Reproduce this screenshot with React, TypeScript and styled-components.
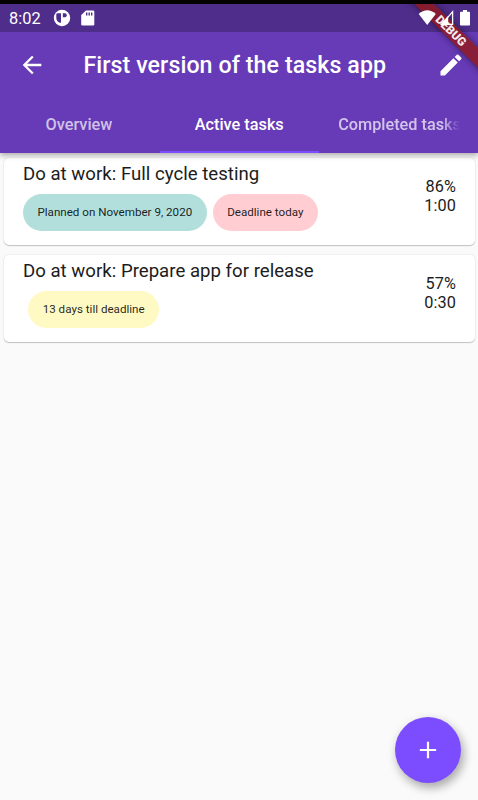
import React from 'react';
import styled, { createGlobalStyle } from 'styled-components';

const GlobalStyle = createGlobalStyle`
  html, body, #root { height: 100%; }
  body { margin: 0; background: #fafafa; font-family: Roboto, "Noto Sans", sans-serif; overflow: hidden; }
  *, *::before, *::after { box-sizing: border-box; }
`;

const Screen = styled.div`
  position: relative;
  width: 478px;
  height: 800px;
  overflow: hidden;
  display: flex;
  flex-direction: column;
  background: #fafafa;
`;

const Header = styled.header`
  flex: none;
  display: flex;
  flex-direction: column;
  height: 153px;
  background: #673ab7;
  box-shadow: 0 2px 5px rgba(0, 0, 0, 0.25), 0 4px 6px rgba(0, 0, 0, 0.08);
  z-index: 1;
`;

const StatusBar = styled.div`
  display: flex;
  align-items: center;
  height: 32px;
  padding: 0 7px 0 9px;
  background: #4f2d8b;
  border-top: 4px solid #030303;
  color: #fff;
`;

const Clock = styled.span`
  width: 43px;
  padding-top: 1px;
  font-size: 16.4px;
  line-height: 28px;
`;

const StatusIcons = styled.div<{ $end?: boolean }>`
  position: relative;
  z-index: 3;
  display: flex;
  align-items: center;
  margin-left: ${(p) => (p.$end ? 'auto' : '0')};
`;

const Toolbar = styled.div`
  display: flex;
  align-items: center;
  height: 65px;
  padding: 0 13px 0 18px;
`;

const IconButton = styled.button`
  display: flex;
  padding: 0;
  border: 0;
  background: none;
  color: #fff;
`;

const Title = styled.h1`
  flex: 1;
  margin: 0 0 0 37.4px;
  color: #fff;
  font-size: 23.2px;
  line-height: 28px;
  font-weight: 500;
  letter-spacing: 0.08px;
  white-space: nowrap;
`;

const Tabs = styled.nav`
  display: grid;
  grid-template-columns: 159.5px 159.5px 159px;
  height: 56px;
`;

const Tab = styled.div<{ $active?: boolean; $align?: 'start' | 'end' }>`
  display: flex;
  align-items: center;
  justify-content: center;
  padding-left: ${(p) => (p.$align === 'end' ? 19.2 : 18)}px;
  padding-right: ${(p) => (p.$align === 'start' ? 19.6 : 18)}px;
  color: ${(p) => (p.$active ? '#fff' : 'rgba(255,255,255,0.7)')};
  box-shadow: ${(p) => (p.$active ? 'inset 0 -2px 0 #7c4dff' : 'none')};
  font-size: 16.27px;
  line-height: 20px;
  font-weight: 500;
`;

const TabLabel = styled.span<{ $fade?: boolean }>`
  max-width: 100%;
  overflow: hidden;
  white-space: nowrap;
  mask-image: ${(p) => (p.$fade ? 'linear-gradient(to right, #000 calc(100% - 18px), transparent)' : 'none')};
`;

const TaskList = styled.main`
  display: flex;
  flex-direction: column;
  gap: 10px;
  padding: 5px 3px 0 4px;
`;

const Card = styled.article`
  display: flex;
  justify-content: space-between;
  height: 87px;
  padding: 4px 19px 0 19px;
  border-radius: 5px;
  background: #fff;
  box-shadow: 0 1px 1px rgba(0, 0, 0, 0.2), 0 0 2px rgba(0, 0, 0, 0.12);
`;

const TaskTitle = styled.h2`
  margin: 0;
  color: #1c1c1c;
  font-size: 18.6px;
  line-height: 24px;
  font-weight: 400;
  letter-spacing: 0.02px;
  white-space: nowrap;
`;

const Chips = styled.div<{ $indent?: boolean }>`
  display: flex;
  gap: 6px;
  margin-top: 8px;
  padding-left: ${(p) => (p.$indent ? '5.4px' : '0')};
`;

const Chip = styled.span<{ $color: string; $width: number }>`
  display: flex;
  align-items: center;
  justify-content: center;
  width: ${(p) => p.$width}px;
  height: 37px;
  padding: 0 0.4px 2px 0;
  border-radius: 19px;
  background: ${(p) => p.$color};
  color: rgba(0, 0, 0, 0.87);
  font-size: 11.62px;
  white-space: nowrap;
`;

const Stats = styled.div`
  display: flex;
  flex-direction: column;
  align-items: flex-end;
  padding-top: 15px;
  color: #1c1c1c;
  font-size: 16.27px;
  line-height: 19px;
  letter-spacing: 0.08px;
`;

const Fab = styled.button`
  position: absolute;
  left: 395px;
  top: 717px;
  display: flex;
  align-items: center;
  justify-content: center;
  width: 66px;
  height: 66px;
  padding: 0;
  border: 0;
  border-radius: 50%;
  background: #7c4dff;
  box-shadow: 3px 5px 10px rgba(0, 0, 0, 0.26), 1px 3px 12px rgba(0, 0, 0, 0.1);
`;

const BannerClip = styled.div`
  position: absolute;
  z-index: 2;
  top: 4px;
  right: 0;
  width: 90px;
  height: 90px;
  overflow: hidden;
  pointer-events: none;
`;

const Banner = styled.div`
  position: absolute;
  top: 31.3px;
  left: 30px;
  width: 120px;
  height: 14px;
  transform-origin: 60px -31.3px;
  transform: rotate(45deg);
  background:
    linear-gradient(rgba(183, 28, 28, 0.63), rgba(183, 28, 28, 0.63)),
    rgba(0, 0, 0, 0.42);
  box-shadow: 0 0 7px rgba(0, 0, 0, 0.5);
  color: #f4e8ec;
  font-size: 11.85px;
  line-height: 14px;
  font-weight: 900;
  text-align: center;
`;

interface Task {
  title: string;
  progress: string;
  time: string;
  indent?: boolean;
  chips: { label: string; color: string; width: number }[];
}

const tasks: Task[] = [
  {
    title: 'Do at work: Full cycle testing',
    progress: '86%',
    time: '1:00',
    chips: [
      { label: 'Planned on November 9, 2020', color: '#b2dfdb', width: 184 },
      { label: 'Deadline today', color: '#ffcdd2', width: 105 },
    ],
  },
  {
    title: 'Do at work: Prepare app for release',
    progress: '57%',
    time: '0:30',
    indent: true,
    chips: [{ label: '13 days till deadline', color: '#fff9c4', width: 131 }],
  },
];

export default function App() {
  return (
    <>
      <GlobalStyle />
      <Screen>
        <Header>
          <StatusBar>
            <Clock>8:02</Clock>
            <StatusIcons>
              <svg width="44" height="20" viewBox="0 0 44 20">
                <circle cx="10" cy="10" r="8.2" fill="#fff" />
                <path d="M5.6 5.3H9v9.4H7.8Q4.6 13.5 4.3 10.2V6.6q0-1.3 1.3-1.3z" fill="#4f2d8b" />
                <path d="M10.8 5.3h2.2q1.7 0 1.7 2t-1.7 2h-2.2z" fill="#4f2d8b" />
                <path d="M34 2.5h7q1.3 0 1.3 1.3v12.4q0 1.3-1.3 1.3H30.5q-1.3 0-1.3-1.3V7z" fill="#fff" />
                <path d="M34.7 4.5v3M37.2 4.5v3M39.7 4.5v3" stroke="#4f2d8b" strokeWidth="1.4" />
              </svg>
            </StatusIcons>
            <StatusIcons $end>
              <svg width="54" height="20" viewBox="0 0 54 20">
                <path d="M1.7 6.1Q10.2 -1.4 18.8 6.1L10.2 17z" fill="#fff" />
                <path d="M35.6 3.7v12.6H25z" fill="none" stroke="#fff" strokeWidth="1.3" />
                <path d="M23 17L31.2 7.8V17z" fill="#fff" />
                <path d="M46 2h4v1.7h2.2q.8 0 .8.8v12q0 1-.8 1h-8.4q-.8 0-.8-1v-12q0-.8.8-.8H46z" fill="#fff" />
              </svg>
            </StatusIcons>
          </StatusBar>
          <Toolbar>
            <IconButton aria-label="Back">
              <svg width="28" height="28" viewBox="0 0 24 24" fill="currentColor">
                <path d="M20 11H7.83l5.59-5.59L12 4l-8 8 8 8 1.41-1.41L7.83 13H20v-2z" />
              </svg>
            </IconButton>
            <Title>First version of the tasks app</Title>
            <IconButton aria-label="Edit">
              <svg width="28" height="28" viewBox="0 0 24 24" fill="currentColor">
                <path d="M3 17.25V21h3.75L17.81 9.94l-3.75-3.75L3 17.25zM20.71 7.04a1 1 0 0 0 0-1.41l-2.34-2.34a1 1 0 0 0-1.41 0l-1.83 1.83 3.75 3.75 1.83-1.83z" />
              </svg>
            </IconButton>
          </Toolbar>
          <Tabs>
            <Tab $align="start"><TabLabel>Overview</TabLabel></Tab>
            <Tab $active><TabLabel>Active tasks</TabLabel></Tab>
            <Tab $align="end"><TabLabel $fade>Completed tasks</TabLabel></Tab>
          </Tabs>
          <BannerClip><Banner>DEBUG</Banner></BannerClip>
        </Header>
        <TaskList>
          {tasks.map((task) => (
            <Card key={task.title}>
              <div>
                <TaskTitle>{task.title}</TaskTitle>
                <Chips $indent={task.indent}>
                  {task.chips.map((chip) => (
                    <Chip key={chip.label} $color={chip.color} $width={chip.width}>{chip.label}</Chip>
                  ))}
                </Chips>
              </div>
              <Stats>
                <span>{task.progress}</span>
                <span>{task.time}</span>
              </Stats>
            </Card>
          ))}
        </TaskList>
        <Fab aria-label="Add task">
          <svg width="28" height="28" viewBox="0 0 28 28" fill="none" stroke="#fff" strokeWidth="2.2">
            <path d="M14 5.8v16.4M5.8 14h16.4" />
          </svg>
        </Fab>
      </Screen>
    </>
  );
}
